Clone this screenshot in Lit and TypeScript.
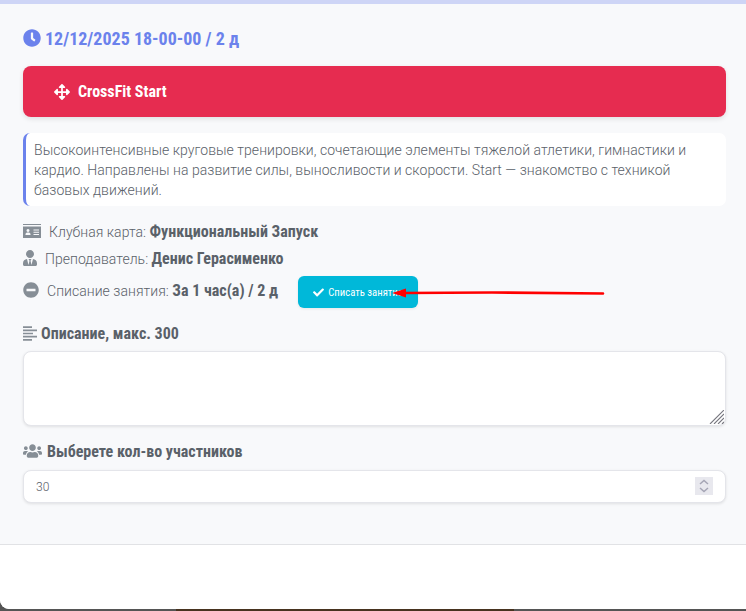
import { LitElement, html, css } from "lit";
import { customElement } from "lit/decorators.js";

const I = (vb: string, d: string, cls: string) => html`<svg class=${cls} viewBox=${vb} fill="currentColor" aria-hidden="true"><path d=${d} fill-rule="evenodd"></path></svg>`;

const clock = "M256,8C119,8,8,119,8,256S119,504,256,504,504,393,504,256,393,8,256,8Zm92.49,313h0l-20,25a16,16,0,0,1-22.49,2.5h0l-67-49.72a40,40,0,0,1-15-31.23V112a16,16,0,0,1,16-16h32a16,16,0,0,1,16,16V256l58,42.5A16,16,0,0,1,348.49,321Z";
const move = "M352.201 425.775l-79.196 79.196c-9.373 9.373-24.568 9.373-33.941 0l-79.196-79.196c-15.119-15.119-4.411-40.971 16.971-40.97h51.162L228 284H127.196v51.162c0 21.382-25.851 32.09-40.971 16.971L7.029 272.937c-9.373-9.373-9.373-24.569 0-33.941L86.225 159.8c15.119-15.119 40.971-4.411 40.971 16.971V228H228V127.196h-51.23c-21.382 0-32.09-25.851-16.971-40.971l79.196-79.196c9.373-9.373 24.568-9.373 33.941 0l79.196 79.196c15.119 15.119 4.411 40.971-16.971 40.971h-51.162V228h100.804v-51.162c0-21.382 25.851-32.09 40.97-16.971l79.196 79.196c9.373 9.373 9.373 24.569 0 33.941L425.773 352.2c-15.119 15.119-40.971 4.411-40.97-16.971V284H284v100.804h51.23c21.382 0 32.09 25.851 16.971 40.971z";
const check = "M173.898 439.404l-166.4-166.4c-9.997-9.997-9.997-26.206 0-36.204l36.203-36.204c9.997-9.998 26.207-9.998 36.204 0L192 312.69 432.095 72.596c9.997-9.997 26.207-9.997 36.204 0l36.203 36.204c9.997 9.997 9.997 26.206 0 36.204l-294.4 294.401c-9.998 9.997-26.207 9.997-36.204-.001z";
const minus = "M256 8C119 8 8 119 8 256s111 248 248 248 248-111 248-248S393 8 256 8zM124 296c-6.6 0-12-5.4-12-12v-56c0-6.6 5.4-12 12-12h264c6.6 0 12 5.4 12 12v56c0 6.6-5.4 12-12 12H124z";
const users = "M96 224c35.3 0 64-28.7 64-64s-28.7-64-64-64-64 28.7-64 64 28.7 64 64 64zm448 0c35.3 0 64-28.7 64-64s-28.7-64-64-64-64 28.7-64 64 28.7 64 64 64zm32 32h-64c-17.6 0-33.5 7.1-45.1 18.6 40.3 22.1 68.9 62 75.1 109.4h66c17.7 0 32-14.3 32-32v-32c0-35.3-28.7-64-64-64zm-256 0c61.9 0 112-50.1 112-112S381.9 32 320 32 208 82.1 208 144s50.1 112 112 112zm76.8 32h-8.3c-20.8 10-43.9 16-68.5 16s-47.6-6-68.5-16h-8.3C179.6 288 128 339.6 128 403.2V432c0 26.5 21.5 48 48 48h288c26.5 0 48-21.5 48-48v-28.8c0-63.6-51.6-115.2-115.2-115.2zm-223.7-13.4C161.5 263.1 145.6 256 128 256H64c-35.3 0-64 28.7-64 64v32c0 17.7 14.3 32 32 32h65.9c6.3-47.4 34.9-87.3 75.2-109.4z";
const tie = "M224 256c70.7 0 128-57.3 128-128S294.7 0 224 0 96 57.3 96 128s57.3 128 128 128zm95.8 32.6L272 480l-32-136 32-56h-96l32 56-32 136-47.8-191.4C56.9 292 0 350.3 0 422.4V464c0 26.5 21.5 48 48 48h352c26.5 0 48-21.5 48-48v-41.6c0-72.1-56.9-130.4-128.2-133.8z";
const idcard = "M0 0H18V1H0ZM0 2.5H18V14H0ZM5 5a1.5 1.5 0 1 0 .01 0ZM2.5 10.5C2.5 9 3.5 8.6 5 8.6S7.5 9 7.5 10.5V11H2.5ZM10.5 5.5V6.5H16V5.5ZM10.5 7.7V8.7H16V7.7ZM10.5 9.9V10.9H16V9.9Z";
const align = "M0 0H9V1.7H0ZM0 3.2H14V4.9H0ZM0 6.4H10V8.1H0ZM0 9.6H14V11.3H0ZM0 12.8H9V14.5H0Z";

@customElement("app-root")
export class AppRoot extends LitElement {
  static styles = css`
    :host { display: block; height: 611px; overflow: hidden; background: #535353; font-family: Roboto, "Noto Sans", sans-serif; color: #5a6169; position: relative; }
    .modal { display: flex; flex-direction: column; height: 609px; border-radius: 0 0 0 9px; overflow: hidden; background: #fff; }
    .topbar { height: 4px; background: #ced5f6; flex: none; }
    .body { height: 541px; box-sizing: border-box; flex: none; background: #f8f9fb; padding: 23px 20px 0 23px; border-bottom: 1px solid #e1e2e5; display: flex; flex-direction: column; }
    .cond { font-stretch: 75%; font-weight: 700; }
    .date { display: flex; align-items: center; gap: 4px; height: 22px; color: #6b82ec; font-size: 18px; }
    .date svg { width: 18px; height: 18px; }
    .card { margin-top: 17px; height: 51px; background: #e62c50; border-radius: 8px; box-shadow: 0 2px 5px rgba(0,0,0,.1); color: #fff; display: flex; align-items: center; padding-left: 31px; gap: 8px; font-size: 16px; }
    .card svg { width: 16px; height: 16px; }
    .desc { margin-top: 16px; height: 73px; box-sizing: border-box; background: #fff; border-left: 3px solid #6b82ec; border-radius: 7px; padding: 7px 8px 0 8px; font-size: 14px; letter-spacing: .04px; font-weight: 300; line-height: 20px; color: #5a6169; }
    .row { display: flex; align-items: center; font-size: 14px; letter-spacing: .04px; font-weight: 300; color: #5a6169; height: 20px; }
    .row b { font-stretch: 75%; font-weight: 700; font-size: 16px; letter-spacing: 0; }
    .row svg { color: #868e96; flex: none; }
    .r1 { margin-top: 15px; gap: 8px; }
    .r1 svg { width: 18px; height: 14px; }
    .r2 { margin-top: 7px; gap: 8px; }
    .r2 svg { width: 14px; height: 16px; }
    .r3 { margin-top: 4px; height: 36px; gap: 8px; }
    .r3 svg { width: 16px; height: 16px; }
    .btn { margin: 4px 0 0 12px; width: 120px; height: 32px; border: 0; border-radius: 6px; background: #00b8d9; color: #fff; display: flex; align-items: center; justify-content: center; gap: 4px; font: 400 10.7px Roboto, sans-serif; font-stretch: 75%; box-shadow: 0 1px 3px rgba(0,0,0,.08); padding: 0; }
    .btn svg { color: #fff; width: 11px; height: 11px; }
    .label { display: flex; align-items: center; gap: 4px; height: 20px; font-size: 16px; }
    .l1 { margin-top: 15px; }
    .l1 svg { width: 14px; height: 15px; color: #868e96; }
    .l2 { margin-top: 15px; gap: 5px; }
    .l2 svg { width: 19px; height: 16px; color: #868e96; }
    textarea, input { box-sizing: border-box; width: 100%; display: block; background: #fff; border: 1px solid #e4e5ea; border-radius: 8px; box-shadow: 0 1px 3px rgba(0,0,0,.1); outline: none; margin: 0; font: 300 12px Roboto, sans-serif; color: #5a6169; }
    .area { position: relative; margin-top: 8px; }
    textarea { height: 75px; resize: none; }
    .grip { position: absolute; right: 2px; bottom: 2px; width: 15px; height: 14px; }
    .num { position: relative; margin-top: 9px; }
    input { height: 33px; padding: 0 12px; }
    .spin { position: absolute; right: 13px; top: 7px; width: 18px; height: 18px; background: #e8e8ee; }
    .foot { flex: 1; background: #fff; }
    .strip { height: 2px; background: linear-gradient(90deg, #555 0 176px, #47331f 176px 514px, #555 514px); }
    .arrow { position: absolute; left: 380px; top: 284px; width: 226px; height: 18px; pointer-events: none; }
  `;

  render() {
    return html`
      <div class="modal">
        <div class="topbar"></div>
        <div class="body">
          <div class="date cond">${I("0 0 512 512", clock, "")}<span>12/12/2025 18-00-00 / 2 д</span></div>
          <div class="card cond">${I("0 0 512 512", move, "")}<span>CrossFit Start</span></div>
          <div class="desc">Высокоинтенсивные круговые тренировки, сочетающие элементы тяжелой атлетики, гимнастики и кардио. Направлены на развитие силы, выносливости и скорости. Start — знакомство с техникой базовых движений.</div>
          <div class="row r1">${I("0 0 18 14", idcard, "")}<span>Клубная карта: <b>Функциональный Запуск</b></span></div>
          <div class="row r2">${I("0 0 448 512", tie, "")}<span>Преподаватель: <b>Денис Герасименко</b></span></div>
          <div class="row r3">${I("0 0 512 512", minus, "")}<span>Списание занятия: <b>За 1 час(а) / 2 д</b></span>
            <button class="btn">${I("0 0 512 512", check, "")}<span>Списать занятие</span></button>
          </div>
          <div class="label l1 cond">${I("0 0 14 14.5", align, "")}<span>Описание, макс. 300</span></div>
          <div class="area">
            <textarea></textarea>
            <svg class="grip" viewBox="0 0 15 14" fill="none" stroke="#77777f" stroke-width="1.1"><path d="M1 14L15 0M5 14L15 4M9 14L15 8M13 14L15 12"></path></svg>
          </div>
          <div class="label l2 cond">${I("0 0 640 512", users, "")}<span>Выберете кол-во участников</span></div>
          <div class="num">
            <input value="30" />
            <div class="spin"><svg viewBox="0 0 18 18" width="18" height="18" fill="none" stroke="#a5a5b5" stroke-width="1.5"><path d="M5 7l4-3.5L13 7M5 11l4 3.5 4-3.5"></path></svg></div>
          </div>
        </div>
        <div class="foot"></div>
      </div>
      <div class="strip"></div>
      <svg class="arrow" viewBox="0 0 226 18"><path d="M223 9.5L112 8.5 24 9" stroke="#f00" stroke-width="2.6" fill="none" stroke-linecap="round"></path><path d="M12 9L26 4.5V13.5Z" fill="#f00"></path></svg>
    `;
  }
}
